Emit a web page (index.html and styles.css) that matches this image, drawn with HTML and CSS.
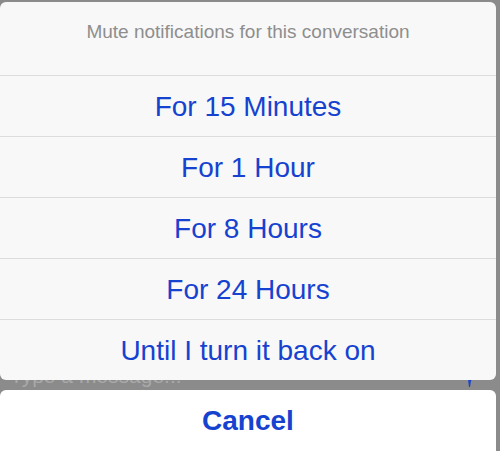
FILE: index.html
```html
<!DOCTYPE html>
<html>
<head>
<meta charset="utf-8">
<link rel="stylesheet" href="styles.css">
</head>
<body>
<div class="screen">
  <div class="chat">
    <div class="composer">
      <span class="placeholder">Type a message...</span>
      <svg class="send-mark" width="6" height="10" viewBox="0 0 6 10"><polygon points="1,1 6,0 4,3 3,9 2,9" fill="#1a44c8"/></svg>
    </div>
  </div>
  <div class="sheet">
    <div class="group">
      <div class="title">Mute notifications for this conversation</div>
      <div class="option">For 15 Minutes</div>
      <div class="option">For 1 Hour</div>
      <div class="option">For 8 Hours</div>
      <div class="option">For 24 Hours</div>
      <div class="option">Until I turn it back on</div>
    </div>
    <div class="group cancel-group">
      <div class="option cancel">Cancel</div>
    </div>
  </div>
</div>
</body>
</html>
```

FILE: styles.css
```css
html, body {
  margin: 0;
  padding: 0;
  width: 500px;
  height: 451px;
  overflow: hidden;
  background: #8b8b8b;
  font-family: "Liberation Sans", Arial, sans-serif;
}

.screen {
  position: relative;
  width: 500px;
  height: 451px;
  overflow: hidden;
}

.chat {
  height: 451px;
}

.composer {
  margin-top: 363px;
  display: flex;
  justify-content: space-between;
  align-items: flex-start;
  padding: 0 27px 0 10px;
  font-size: 21px;
  line-height: 26px;
  color: #a9a9a9;
}

.send-mark {
  margin-top: 15px;
}

.sheet {
  position: absolute;
  top: 2px;
  left: 0;
  right: 4px;
  display: flex;
  flex-direction: column;
  gap: 10px;
}

.group {
  background: #f8f8f8;
  border-radius: 6px;
  overflow: hidden;
}

.title {
  height: 54px;
  padding-top: 19px;
  text-align: center;
  font-size: 19px;
  line-height: 22px;
  color: #8e8e8e;
}

.option {
  height: 60px;
  border-top: 1px solid #dcdcdc;
  text-align: center;
  font-size: 28px;
  line-height: 62px;
  color: #1642d0;
}

.cancel-group {
  background: #ffffff;
}

.cancel {
  border-top: none;
  height: 70px;
  font-weight: bold;
}
```
